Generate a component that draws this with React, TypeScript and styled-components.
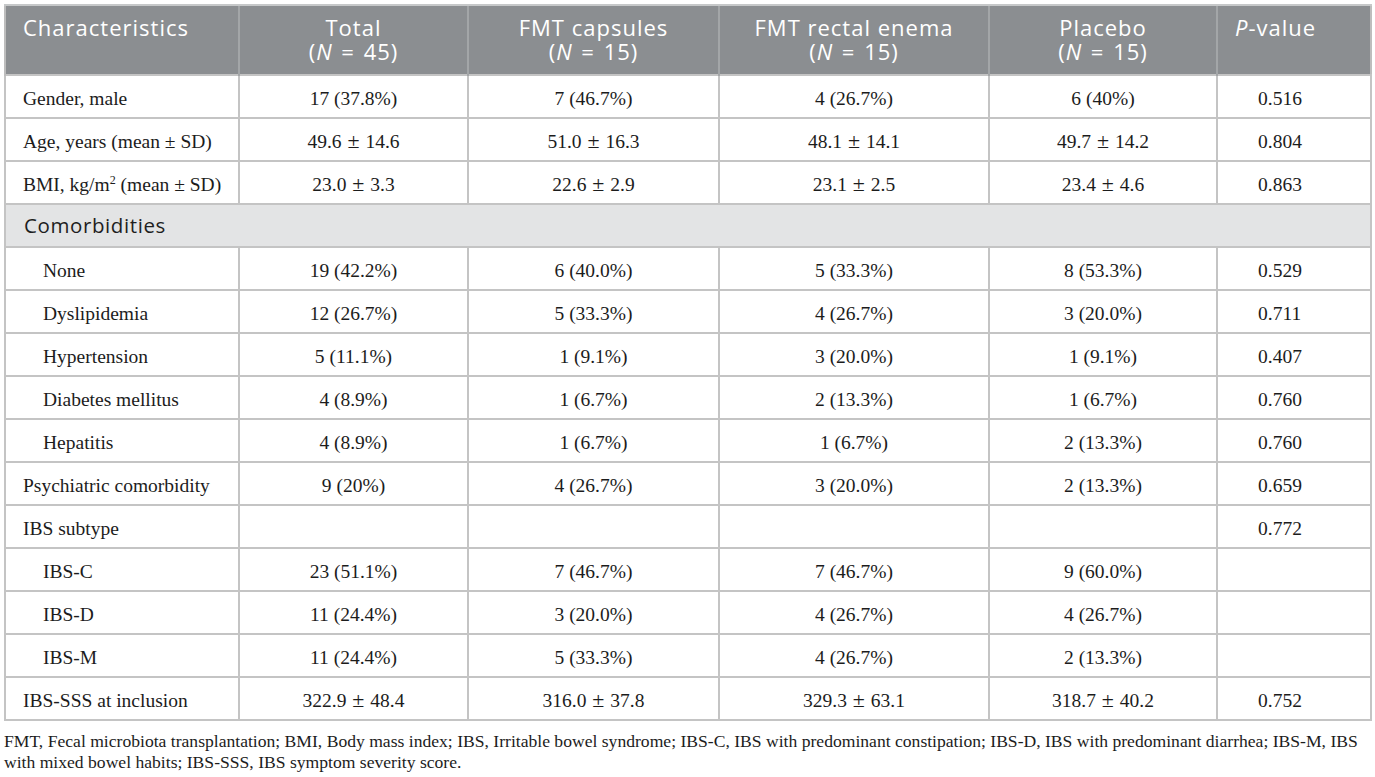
import React from "react";
import styled, { createGlobalStyle } from "styled-components";

const Global = createGlobalStyle`
  html, body { margin: 0; padding: 0; background: #ffffff; }
  #root { width: 1375px; }
`;

const Page = styled.div`
  padding: 4px 5px 0 4px;
  box-sizing: border-box;
  width: 1375px;
`;

const Table = styled.table`
  width: 1366px;
  table-layout: fixed;
  border-collapse: collapse;
  border: 2px solid #bdbdbd;
`;

const HeadRow = styled.tr`
  background: #8b8e91;
  height: 70px;
`;

const Th = styled.th<{ $align?: "left" | "center" }>`
  color: #ffffff;
  font-family: "Open Sans", "Liberation Sans", sans-serif;
  font-weight: 400;
  font-size: 22px;
  line-height: 24px;
  letter-spacing: 1px;
  text-align: ${(p) => p.$align ?? "center"};
  vertical-align: top;
  padding: ${(p) => (p.$align === "left" ? "9px 8px 0 17px" : "9px 8px 0 8px")};
  border-left: 2px solid #a3a6a8;
  border-top: 2px solid #c6c8c9;
  white-space: nowrap;
  &:first-child { border-left: 2px solid #bdbdbd; }
  i { font-style: italic; }
`;

const Eq = styled.span`
  padding: 0 2px;
`;

const Row = styled.tr`
  height: 43px;
`;

const Td = styled.td`
  font-family: "Liberation Serif", "Times New Roman", serif;
  font-size: 19.5px;
  color: #1c1c1c;
  border: 2px solid #c4c4c4;
  padding: 4px 0 0 0;
  text-align: center;
  vertical-align: middle;
  white-space: nowrap;
`;

const Pm = styled.span`
  font-size: 22px;
  line-height: 0;
  padding: 0 1px;
`;

const LabelTd = styled(Td)<{ $indent?: boolean }>`
  text-align: left;
  padding-left: ${(p) => (p.$indent ? "37px" : "17px")};
`;

const PTd = styled(Td)`
  text-align: left;
  padding-left: 40px;
`;

const SectionRow = styled.tr`
  height: 43px;
  background: #e3e4e5;
`;

const SectionTd = styled.td`
  font-family: "Open Sans", "Liberation Sans", sans-serif;
  font-size: 20.5px;
  letter-spacing: 0.6px;
  color: #1e1e1e;
  padding: 0 0 2px 18px;
  border: 2px solid #c4c4c4;
`;

const Footnote = styled.p`
  margin: 10px 0 0 0;
  font-family: "Liberation Serif", "Times New Roman", serif;
  font-size: 17.6px;
  line-height: 21px;
  color: #1c1c1c;
  width: 1369px;
`;

type DataRow = {
  label: React.ReactNode;
  indent?: boolean;
  values: string[];
  p: string;
};

const before: DataRow[] = [
  { label: "Gender, male", values: ["17 (37.8%)", "7 (46.7%)", "4 (26.7%)", "6 (40%)"], p: "0.516" },
  { label: "Age, years (mean ± SD)", values: ["49.6 ± 14.6", "51.0 ± 16.3", "48.1 ± 14.1", "49.7 ± 14.2"], p: "0.804" },
  {
    label: (
      <>
        BMI, kg/m<sup style={{ fontSize: "12px", lineHeight: 0 }}>2</sup> (mean ± SD)
      </>
    ),
    values: ["23.0 ± 3.3", "22.6 ± 2.9", "23.1 ± 2.5", "23.4 ± 4.6"],
    p: "0.863",
  },
];

const after: DataRow[] = [
  { label: "None", indent: true, values: ["19 (42.2%)", "6 (40.0%)", "5 (33.3%)", "8 (53.3%)"], p: "0.529" },
  { label: "Dyslipidemia", indent: true, values: ["12 (26.7%)", "5 (33.3%)", "4 (26.7%)", "3 (20.0%)"], p: "0.711" },
  { label: "Hypertension", indent: true, values: ["5 (11.1%)", "1 (9.1%)", "3 (20.0%)", "1 (9.1%)"], p: "0.407" },
  { label: "Diabetes mellitus", indent: true, values: ["4 (8.9%)", "1 (6.7%)", "2 (13.3%)", "1 (6.7%)"], p: "0.760" },
  { label: "Hepatitis", indent: true, values: ["4 (8.9%)", "1 (6.7%)", "1 (6.7%)", "2 (13.3%)"], p: "0.760" },
  { label: "Psychiatric comorbidity", values: ["9 (20%)", "4 (26.7%)", "3 (20.0%)", "2 (13.3%)"], p: "0.659" },
  { label: "IBS subtype", values: ["", "", "", ""], p: "0.772" },
  { label: "IBS-C", indent: true, values: ["23 (51.1%)", "7 (46.7%)", "7 (46.7%)", "9 (60.0%)"], p: "" },
  { label: "IBS-D", indent: true, values: ["11 (24.4%)", "3 (20.0%)", "4 (26.7%)", "4 (26.7%)"], p: "" },
  { label: "IBS-M", indent: true, values: ["11 (24.4%)", "5 (33.3%)", "4 (26.7%)", "2 (13.3%)"], p: "" },
  { label: "IBS-SSS at inclusion", values: ["322.9 ± 48.4", "316.0 ± 37.8", "329.3 ± 63.1", "318.7 ± 40.2"], p: "0.752" },
];

const Value = ({ text }: { text: string }) => {
  const parts = text.split(" ± ");
  if (parts.length !== 2) return <>{text}</>;
  return (
    <>
      {parts[0]} <Pm>±</Pm> {parts[1]}
    </>
  );
};

const DataLine = ({ row }: { row: DataRow }) => (
  <Row>
    <LabelTd $indent={row.indent}>{row.label}</LabelTd>
    {row.values.map((v, i) => (
      <Td key={i}>
        <Value text={v} />
      </Td>
    ))}
    <PTd>{row.p}</PTd>
  </Row>
);

const NHead = ({ n }: { n: number }) => (
  <>
    (<i>N</i> <Eq>=</Eq> {n})
  </>
);

export default function App() {
  return (
    <Page>
      <Global />
      <Table>
        <colgroup>
          <col style={{ width: 234 }} />
          <col style={{ width: 229 }} />
          <col style={{ width: 251 }} />
          <col style={{ width: 270 }} />
          <col style={{ width: 228 }} />
          <col style={{ width: 154 }} />
        </colgroup>
        <thead>
          <HeadRow>
            <Th $align="left">Characteristics</Th>
            <Th>
              Total
              <br />
              <NHead n={45} />
            </Th>
            <Th>
              FMT capsules
              <br />
              <NHead n={15} />
            </Th>
            <Th>
              FMT rectal enema
              <br />
              <NHead n={15} />
            </Th>
            <Th>
              Placebo
              <br />
              <NHead n={15} />
            </Th>
            <Th $align="left">
              <i>P</i>-value
            </Th>
          </HeadRow>
        </thead>
        <tbody>
          {before.map((r, i) => (
            <DataLine key={"b" + i} row={r} />
          ))}
          <SectionRow>
            <SectionTd colSpan={6}>Comorbidities</SectionTd>
          </SectionRow>
          {after.map((r, i) => (
            <DataLine key={"a" + i} row={r} />
          ))}
        </tbody>
      </Table>
      <Footnote>
        FMT, Fecal microbiota transplantation; BMI, Body mass index; IBS, Irritable bowel syndrome; IBS-C, IBS with
        predominant constipation; IBS-D, IBS with predominant diarrhea; IBS-M, IBS with mixed bowel habits; IBS-SSS,
        IBS symptom severity score.
      </Footnote>
    </Page>
  );
}
